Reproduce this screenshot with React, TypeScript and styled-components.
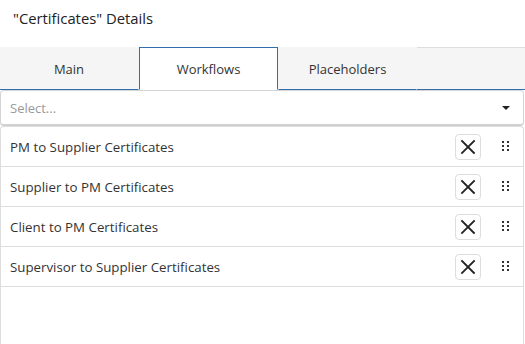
import styled, { createGlobalStyle } from "styled-components";

const GlobalStyle = createGlobalStyle`
    html, body {
        margin: 0;
        padding: 0;
        background: #fff;
    }
    body {
        font-family: "Open Sans", "Noto Sans", sans-serif;
        font-size: 13px;
        color: #333;
    }
`;

const workflows = [
    "PM to Supplier Certificates",
    "Supplier to PM Certificates",
    "Client to PM Certificates",
    "Supervisor to Supplier Certificates",
];

const tabs = ["Main", "Workflows", "Placeholders"];

const XIcon = () => (
    <svg width="16" height="16" viewBox="0 0 16 16">
        <path d="M2 2 L14 14 M14 2 L2 14" stroke="#222" strokeWidth="1.8" strokeLinecap="square" fill="none" />
    </svg>
);

const DragIcon = () => (
    <svg width="7" height="11" viewBox="0 0 7 11">
        {[0, 4, 8].map((y) => (
            <g key={y}>
                <rect x="0" y={y} width="2" height="2" fill="#333" />
                <rect x="5" y={y} width="2" height="2" fill="#333" />
            </g>
        ))}
    </svg>
);

const App = () => {
    const active = "Workflows";

    return (
        <Page>
            <GlobalStyle />
            <Header>"Certificates" Details</Header>

            <TabBar>
                {tabs.map((tab) => (
                    <Tab key={tab} active={tab === active}>
                        {tab}
                    </Tab>
                ))}
                <TabFiller />
            </TabBar>

            <SelectBox>
                <Placeholder>Select...</Placeholder>
                <Caret />
            </SelectBox>

            <List>
                {workflows.map((name) => (
                    <Row key={name}>
                        <RowLabel>{name}</RowLabel>
                        <RemoveButton title="Remove">
                            <XIcon />
                        </RemoveButton>
                        <Handle>
                            <DragIcon />
                        </Handle>
                    </Row>
                ))}
            </List>
        </Page>
    );
};

export default App;

const Page = styled.div`
    width: 525px;
    height: 344px;
    display: flex;
    flex-direction: column;
    overflow: hidden;
`;

const Header = styled.div`
    height: 47px;
    flex-shrink: 0;
    box-sizing: border-box;
    padding: 7px 13px 0;
    font-size: 14.8px;
    line-height: 22px;
    color: #222;
`;

const TabBar = styled.div`
    display: flex;
    flex-shrink: 0;
    height: 43px;
    box-sizing: border-box;
    border-top: 1px solid #ddd;
    background: #f5f5f5;
`;

const Tab = styled.div<{ active: boolean }>`
    width: 139px;
    height: 43px;
    margin-top: -1px;
    box-sizing: border-box;
    display: flex;
    align-items: center;
    justify-content: center;
    font-size: 13px;
    color: #333;
    background: ${({ active }) => (active ? "#fff" : "#f5f5f5")};
    border: 1px solid ${({ active }) => (active ? "#336ea8" : "transparent")};
    border-bottom: 1px solid ${({ active }) => (active ? "#fff" : "#336ea8")};
    &:first-child {
        border-left: none;
    }
`;

const TabFiller = styled.div`
    flex: 1;
    height: 43px;
    margin-top: -1px;
    box-sizing: border-box;
    border-top: 1px solid #ddd;
    border-bottom: 1px solid #336ea8;
`;

const SelectBox = styled.div`
    height: 36px;
    flex-shrink: 0;
    box-sizing: border-box;
    display: flex;
    align-items: center;
    padding: 0 13px 0 9px;
    border: 1px solid #d4d4d4;
    border-bottom: 2px solid #d0d0d0;
    border-radius: 4px;
    margin-right: 1px;
`;

const Placeholder = styled.span`
    flex: 1;
    color: #999;
    font-size: 13px;
`;

const Caret = styled.span`
    width: 0;
    height: 0;
    border-left: 4px solid transparent;
    border-right: 4px solid transparent;
    border-top: 4px solid #222;
`;

const List = styled.div`
    flex: 1;
    border: 1px solid #ddd;
    border-bottom: none;
    border-radius: 4px 4px 0 0;
    margin-right: 1px;
`;

const Row = styled.div`
    display: flex;
    align-items: center;
    height: 40px;
    box-sizing: border-box;
    border-bottom: 1px solid #ddd;
    padding: 0 14px 0 9px;
`;

const RowLabel = styled.span`
    flex: 1;
    font-size: 13.3px;
    color: #333;
`;

const RemoveButton = styled.button`
    width: 26px;
    height: 26px;
    padding: 0;
    display: flex;
    align-items: center;
    justify-content: center;
    background: #fff;
    border: 1px solid #ddd;
    border-radius: 4px;
    cursor: pointer;
`;

const Handle = styled.span`
    display: flex;
    margin-left: 21px;
    cursor: grab;
`;
